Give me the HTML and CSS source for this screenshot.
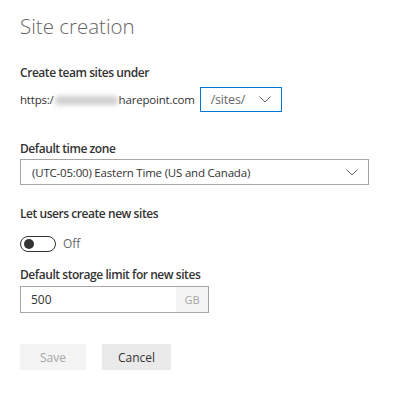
FILE: index.html
```html
<!DOCTYPE html>
<html lang="en">
<head>
    <meta charset="UTF-8">
    <meta name="viewport" content="width=device-width, initial-scale=1.0">
    <title>Site creation</title>
    <link rel="stylesheet" href="styles.css">
</head>
<body>
    <div class="panel">
        <h1 class="title">Site creation</h1>

        <div class="field first">
            <div class="label">Create team sites under</div>
            <div class="url-row">
                <span class="url">https:/<span class="blur"></span>harepoint.com</span>
                <div class="select small focused">
                    <span>/sites/</span>
                    <svg class="chev" width="12" height="7" viewBox="0 0 12 7"><path d="M0.5 0.5 L6 6 L11.5 0.5" fill="none" stroke="#666" stroke-width="1"/></svg>
                </div>
            </div>
        </div>

        <div class="field second">
            <div class="label">Default time zone</div>
            <div class="select wide">
                <span>(UTC-05:00) Eastern Time (US and Canada)</span>
                <svg class="chev" width="12" height="7" viewBox="0 0 12 7"><path d="M0.5 0.5 L6 6 L11.5 0.5" fill="none" stroke="#666" stroke-width="1"/></svg>
            </div>
        </div>

        <div class="field third">
            <div class="label">Let users create new sites</div>
            <div class="toggle-row">
                <div class="toggle"><div class="knob"></div></div>
                <span class="toggle-text">Off</span>
            </div>
        </div>

        <div class="field tight">
            <div class="label">Default storage limit for new sites</div>
            <div class="number-input">
                <span class="value">500</span>
                <span class="suffix">GB</span>
            </div>
        </div>

        <div class="buttons">
            <button class="btn disabled">Save</button>
            <button class="btn">Cancel</button>
        </div>
    </div>
</body>
</html>
```

FILE: styles.css
```css
body { margin: 0; font-family: "Open Sans", "Noto Sans", Arial, sans-serif; background: #fff; color: #333; }
.panel { padding: 14px 20px 20px 20px; width: 349px; }
.title { font-size: 20.5px; font-weight: 300; color: #666; margin: 0; line-height: 24px; }
.field.first { margin-top: 26px; }
.field.second { margin-top: 28px; }
.field.third { margin-top: 20px; }
.field.tight { margin-top: 14px; }
.label { font-size: 12px; font-weight: 600; color: #333; line-height: 18px; letter-spacing: -0.45px; }
.url-row { display: flex; align-items: center; margin-top: 5px; }
.url { font-size: 11.5px; color: #333; letter-spacing: -0.2px; }
.blur { display: inline-block; width: 63px; height: 9px; margin: 0 1px; vertical-align: -1px; background: #cfcfcf; border-radius: 4px; filter: blur(2.5px); }
.select { display: flex; align-items: center; justify-content: space-between; border: 1px solid #a6a6a6; box-sizing: border-box; height: 26px; padding: 0 10px; font-size: 11.5px; color: #333; letter-spacing: -0.2px; }
.select.small { width: 82px; margin-left: 5px; height: 25px; color: #666; font-size: 12.5px; }
.select.focused { border-color: #0078d4; }
.select.wide { width: 349px; margin-top: 1px; padding-left: 11px; }
.chev { flex-shrink: 0; }
.toggle-row { display: flex; align-items: center; margin-top: 12px; }
.toggle { width: 36px; height: 16px; border: 1px solid #333; border-radius: 9px; box-sizing: border-box; position: relative; }
.knob { position: absolute; left: 3px; top: 2px; width: 10px; height: 10px; border-radius: 50%; background: #333; }
.toggle-text { font-size: 12px; color: #666; margin-left: 7px; }
.number-input { display: flex; width: 189px; height: 27px; border: 1px solid #a6a6a6; box-sizing: border-box; margin-top: 2px; }
.value { flex: 1; font-size: 12px; color: #333; padding-left: 10px; line-height: 25px; }
.suffix { width: 32px; background: #f4f4f4; color: #a6a6a6; font-size: 11px; text-align: center; line-height: 25px; }
.buttons { display: flex; gap: 16px; margin-top: 31px; }
.btn { height: 26px; border: none; background: #eaeaea; color: #333; font-family: inherit; font-size: 12px; padding: 0; width: 69px; }
.btn.disabled { background: #f4f4f4; color: #a6a6a6; width: 66px; }
```
